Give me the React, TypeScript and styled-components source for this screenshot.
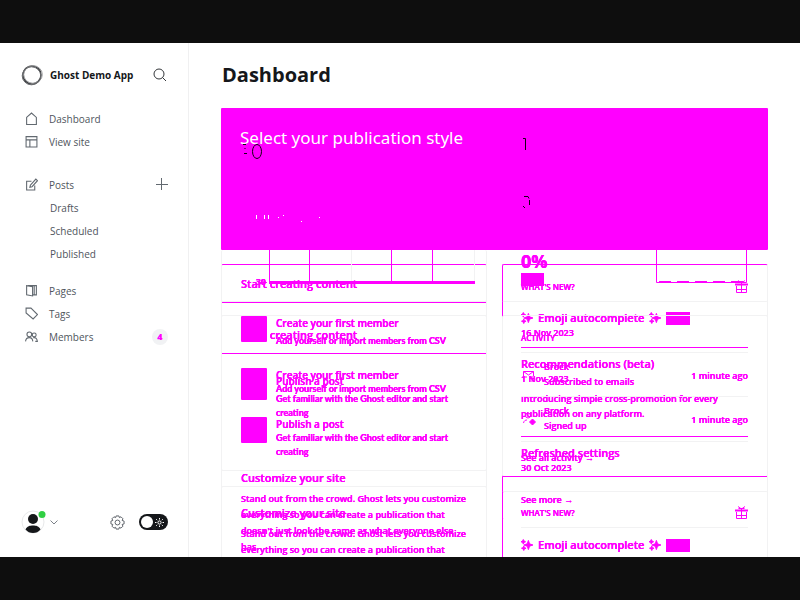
import React from "react";
import styled, { createGlobalStyle } from "styled-components";

const pink = "#ff00ff";
const faint = "#f2f2f3";

const GlobalStyle = createGlobalStyle`
  * { box-sizing: border-box; }
  body { margin: 0; font-family: "Open Sans", "Noto Sans", sans-serif; background: #fff; }
  h1, h2, h3, p, ul { margin: 0; padding: 0; }
  ul { list-style: none; }
  button { border: 0; padding: 0; background: none; font: inherit; color: inherit; display: flex; }
  a { color: inherit; text-decoration: none; }
  svg { display: block; flex: none; }
`;

const Frame = styled.div`
  display: grid;
  grid-template-rows: minmax(0, 1fr);
  grid-template-columns: 189px minmax(0, 1fr);
  height: 100vh;
  border: solid #0e0e0e;
  border-width: 43px 0;
  overflow: hidden;
`;

const Sidebar = styled.aside`
  display: flex;
  flex-direction: column;
  border-right: 1px solid #f0f0f1;
  padding: 21px 20px 23px 21px;
  color: #4f555d;
  font-size: 10px;
`;

const Brand = styled.header`
  display: flex;
  align-items: center;
  height: 22px;
  margin-bottom: 21px;
`;

const BrandName = styled.strong`
  flex: 1;
  margin-left: 7px;
  font-size: 10px;
  color: #15171a;
  white-space: nowrap;
`;

const NavGroup = styled.ul<{ $gap: number }>`
  margin-bottom: ${(p) => p.$gap}px;
`;

const NavItem = styled.li`
  display: flex;
  align-items: center;
  justify-content: space-between;
  height: 23px;
`;

const NavLink = styled.a<{ $sub?: boolean }>`
  display: flex;
  align-items: center;
  gap: 11px;
  padding-left: ${(p) => (p.$sub ? 29 : 4)}px;
`;

const CountBadge = styled.span`
  width: 16px;
  height: 16px;
  border-radius: 8px;
  background: #f1f2f4;
  color: ${pink};
  font-size: 9px;
  font-weight: 800;
  line-height: 16px;
  text-align: center;
`;

const AccountBar = styled.footer`
  display: flex;
  align-items: center;
  justify-content: space-between;
  margin-top: auto;
  height: 24px;
`;

const AccountGroup = styled.div`
  display: flex;
  align-items: center;
  gap: 14px;
`;

const ThemeSwitch = styled.button`
  && {
    width: 29px;
    height: 16px;
    padding: 2px 4px 2px 2px;
    border-radius: 8px;
    background: #15171a;
    align-items: center;
    justify-content: space-between;
  }
  &::before {
    content: "";
    width: 12px;
    height: 12px;
    border-radius: 6px;
    background: #fff;
  }
`;

const Main = styled.main`
  padding: 18px 32px 0;
  overflow: hidden;
`;

const PageTitle = styled.h1`
  font-size: 20px;
  line-height: 28px;
  margin: 0 0 19px 1px;
  color: #15171a;
`;

const Banner = styled.section`
  position: relative;
  height: 142px;
  padding: 20px 19px;
  background: ${pink};
  border-radius: 1px;
`;

const BannerTitle = styled.h2`
  font-family: "Noto Sans", sans-serif;
  font-size: 17px;
  font-weight: 400;
  line-height: 20px;
  color: #fff;
  white-space: nowrap;
`;

const BannerMarks = styled.svg`
  position: absolute;
  left: 0;
  top: 0;
`;

const Board = styled.div`
  display: grid;
`;

const Layer = styled.div`
  grid-area: 1 / 1;
  display: grid;
  grid-template-columns: minmax(0, 1fr) minmax(0, 1fr);
  gap: 15px;
  align-items: start;
`;

const Card = styled.section<{ $top?: number; $tone?: "pink" | "faint" | "open"; $side?: string; $h?: number }>`
  margin-top: ${(p) => p.$top ?? 0}px;
  min-height: ${(p) => p.$h ?? 0}px;
  border: 1px solid ${(p) => (p.$tone === "open" ? "transparent" : faint)};
  border-top-color: ${(p) => (p.$tone === "pink" ? pink : p.$tone === "open" ? "transparent" : faint)};
  border-bottom-color: ${(p) => (p.$tone ? "transparent" : faint)};
  border-left-color: ${(p) => p.$side ?? faint};
  border-radius: 2px;
  color: ${pink};
  text-shadow: 0 0 0 ${pink}, 0 0 0 ${pink};
  white-space: nowrap;
`;

const ChartCard = styled(Card)`
  display: flex;
  justify-content: space-between;
  align-items: flex-start;
  height: 52px;
  border-top: 0;
  border-bottom-color: ${faint};
`;

const CardHead = styled.h2`
  padding-left: 19px;
  font-size: 11px;
  font-weight: 600;
  line-height: 37px;
  border-bottom: 1px solid ${pink};
`;

const Steps = styled.ul<{ $top: number }>`
  padding: ${(p) => p.$top}px 19px 11px;
`;

const Step = styled.li<{ $h: number }>`
  display: flex;
  gap: 9px;
  min-height: ${(p) => p.$h}px;
`;

const StepArt = styled.span`
  width: 26px;
  height: 26px;
  flex: none;
  border-radius: 1px;
  background: ${pink};
`;

const StepTitle = styled.h3`
  font-size: 10px;
  line-height: 14px;
  font-weight: 600;
`;

const StepText = styled.p<{ $gap: number }>`
  margin-top: ${(p) => p.$gap}px;
  font-family: Lato, sans-serif;
  font-size: 9px;
  font-weight: 700;
  line-height: 14px;
`;

const Promo = styled.div<{ $top: number }>`
  padding: ${(p) => p.$top}px 19px 0;
`;

const PromoTitle = styled.h2`
  font-size: 11px;
  font-weight: 600;
  line-height: 16px;
  margin-bottom: 5px;
`;

const PromoText = styled.p`
  font-size: 9px;
  font-weight: 600;
  line-height: 16px;
`;

const Pane = styled.div<{ $top: number }>`
  padding: ${(p) => p.$top}px 19px 0 18px;
`;

const Caption = styled.h2`
  display: flex;
  justify-content: space-between;
  align-items: center;
  height: 12px;
  font-size: 8px;
  font-weight: 600;
`;

const Rule = styled.hr<{ $tone: string; $before: number; $after: number }>`
  border: 0;
  height: 1px;
  margin: ${(p) => p.$before}px 0 ${(p) => p.$after}px;
  background: ${(p) => p.$tone};
`;

const NewsTitle = styled.h3<{ $top?: number }>`
  display: flex;
  align-items: center;
  gap: 5px;
  margin-top: ${(p) => p.$top ?? 0}px;
  font-size: 11px;
  font-weight: 600;
  line-height: 14px;
`;

const NewTag = styled.span`
  width: 24px;
  height: 13px;
  background: ${pink};
`;

const Small = styled.p<{ $top?: number; $lh?: number }>`
  margin-top: ${(p) => p.$top ?? 1}px;
  font-size: 9px;
  font-weight: 600;
  line-height: ${(p) => p.$lh ?? 14}px;
`;

const Event = styled.div`
  display: flex;
  align-items: center;
  gap: 7px;
  height: 43px;
`;

const EventBody = styled.div`
  flex: 1;
`;

const Rate = styled.div`
  padding-left: 18px;
  font-size: 18px;
  font-weight: 700;
  line-height: 22px;
`;

const RateTag = styled.div`
  width: 23px;
  height: 13px;
  background: ${pink};
`;

const AxisLabel = styled.span`
  margin: 25px 3px 0 auto;
  font-size: 9px;
  font-weight: 700;
  line-height: 14px;
`;

const line = { fill: "none", stroke: "#626970", strokeWidth: 1 } as const;

const icons: Record<string, React.ReactNode> = {
  home: <path d="M1.500 5 6 1l4.500 4v6.500h-9Z" />,
  site: <path d="M1 1.500h10v9.500H1ZM1 4.500h10M4.500 4.500V11" />,
  edit: <path d="M6 3H1.500v8H9V7M5 6.500 10 1l1.500 1.500L6.500 8 4.500 8.500Z" />,
  pages: <path d="M1.500 1.500 7 2.500V11L1.500 10ZM3 1.500h5.500V10M9 1.500h1.500V10H7" />,
  tag: <path d="M1 1h4.500L11.500 7 7.500 11 1 5.500Z" />,
  members: (
    <>
      <circle cx="4" cy="4" r="2.200" />
      <circle cx="8.500" cy="4.500" r="1.800" />
      <path d="M0.500 10.500C.8 7.500 2 7 4 7s3 1 3.200 3.500M7.500 7.200C10 6.500 11.200 8 11.400 10.500H9.500" />
    </>
  ),
};

const Icon = ({ name }: { name: string }) => (
  <svg width="13" height="13" viewBox="0 0 12 12" {...line}>
    {icons[name]}
  </svg>
);

const Link = ({ icon, children }: { icon?: string; children: React.ReactNode }) => (
  <NavLink href="#" $sub={!icon}>
    {icon && <Icon name={icon} />}
    {children}
  </NavLink>
);

const Gear = () => (
  <svg width="15" height="15" viewBox="0 0 16 16" fill="none" stroke="#555b62">
    <circle cx="8" cy="8" r="2.600" />
    <path d="M6.500 1h3l.5 1.800 1.700-.9 2.100 2.100-.9 1.800 2.100.7v3l-2.100.6.9 1.800-2.100 2.100-1.700-.9-.5 1.900h-3L6 13.100l-1.800.9-2.100-2.100.9-1.800L1 9.500v-3l2-.7-.9-1.800 2.100-2.100 1.800.9Z" />
  </svg>
);

const Sun = () => (
  <svg width="9" height="9" viewBox="0 0 9 9" fill="none" stroke="#fff">
    <circle cx="4.500" cy="4.500" r="1.600" />
    <path d="M4.500 0v1.500M4.500 7.500V9M0 4.500h1.500M7.500 4.500H9M1.200 1.200l1 1M6.800 6.800l1 1M1.200 7.800l1-1M6.800 2.200l1-1" />
  </svg>
);

const Gift = () => (
  <svg width="13" height="13" viewBox="0 0 13 13" fill="none" stroke={pink}>
    <path d="M1.500 6v6.500h10V6M6.500 3v9.500M1.500 9.500h10M3 .5 6.500 3 10 .5M3.500 2.500h6" />
    <path d="M0 4.500h13" strokeWidth="2" />
  </svg>
);

const Sparkles = () => (
  <svg width="12" height="12" viewBox="0 0 13 12" fill={pink} stroke={pink}>
    <path d="M8 1l1.300 3.700L13 6 9.300 7.300 8 11 6.700 7.300 3 6l3.700-1.300ZM2.500 0l.8 1.700L5 2.500l-1.700.8L2.500 5l-.8-1.700L0 2.500l1.700-.8ZM3 7l.7 1.800L5.500 9.500l-1.800.7L3 12l-.7-1.800L.5 9.500l1.800-.7Z" />
  </svg>
);

const GettingStarted = ({ descGap, first, second, top }: { descGap: number; first: number; second: number; top: number }) => (
  <>
    <CardHead>Start creating content</CardHead>
    <Steps $top={top}>
      <Step $h={first}>
        <StepArt />
        <div>
          <StepTitle>Create your first member</StepTitle>
          <StepText $gap={descGap}>Add yourself or import members from CSV</StepText>
        </div>
      </Step>
      <Step $h={second}>
        <StepArt />
        <div>
          <StepTitle>Publish a post</StepTitle>
          <StepText $gap={descGap}>
            Get familiar with the Ghost editor and start
            <br />
            creating
          </StepText>
        </div>
      </Step>
    </Steps>
  </>
);

const Customize = ({ top }: { top: number }) => (
  <Promo $top={top}>
    <PromoTitle>Customize your site</PromoTitle>
    <PromoText>
      Stand out from the crowd. Ghost lets you customize
      <br />
      everything so you can create a publication that
      <br />
      doesn't just look the same as what everyone else
      <br />
      has.
    </PromoText>
  </Promo>
);

const EmojiNews = ({ top }: { top: number }) => (
  <>
    <NewsTitle $top={top}>
      <Sparkles />
      Emoji autocomplete
      <Sparkles />
      <NewTag />
    </NewsTitle>
    <Small>16 Nov 2023</Small>
  </>
);

const EventRow = ({ kind, text }: { kind: "mail" | "user"; text: string }) => (
  <Event>
    <svg width="16" height="14" viewBox="0 0 16 14" fill="none" stroke={pink}>
      {kind === "mail" ? (
        <path d="M2.500 9V3.500h10V8M2.500 3.500l5 3.500 5-3.500M2.500 9H6M8 10.500h6M11 8v6" />
      ) : (
        <>
          <circle cx="7" cy="3.500" r="2.500" />
          <path d="M2.500 11C3 8.500 4.500 8 6 8" />
          <path d="M11.500 7 14.500 10l-3 3-3-3Z" fill={pink} />
        </>
      )}
    </svg>
    <EventBody>
      <Small $top={0}>Brock</Small>
      <Small>{text}</Small>
    </EventBody>
    <Small $top={3}>1 minute ago</Small>
  </Event>
);

export default function App() {
  return (
    <>
      <GlobalStyle />
      <Frame>
        <Sidebar>
          <Brand>
            <svg width="22" height="22" viewBox="0 0 22 22" fill="none">
              <circle cx="11" cy="11" r="9" stroke="#3d3f42" strokeWidth="1.500" />
              <ellipse cx="12" cy="10.500" rx="9.300" ry="8.800" stroke="#9a9b9d" />
              <ellipse cx="10.500" cy="11.800" rx="9.300" ry="9" stroke="#66686b" />
            </svg>
            <BrandName>Ghost Demo App</BrandName>
            <button aria-label="Search">
              <svg width="15" height="14" viewBox="0 0 15 14" fill="none" stroke="#33363a">
                <circle cx="6" cy="6" r="5" />
                <path d="M9.500 9.500 13 13" />
              </svg>
            </button>
          </Brand>
          <nav>
            <NavGroup $gap={20}>
              <NavItem><Link icon="home">Dashboard</Link></NavItem>
              <NavItem><Link icon="site">View site</Link></NavItem>
            </NavGroup>
            <NavGroup $gap={14}>
              <NavItem>
                <Link icon="edit">Posts</Link>
                <button aria-label="New post">
                  <svg width="13" height="13" viewBox="0 0 13 13" stroke="#626970">
                    <path d="M1 6.500h12M6.500 0v12" />
                  </svg>
                </button>
              </NavItem>
              <NavItem><Link>Drafts</Link></NavItem>
              <NavItem><Link>Scheduled</Link></NavItem>
              <NavItem><Link>Published</Link></NavItem>
            </NavGroup>
            <NavGroup $gap={0}>
              <NavItem><Link icon="pages">Pages</Link></NavItem>
              <NavItem><Link icon="tag">Tags</Link></NavItem>
              <NavItem><Link icon="members">Members</Link><CountBadge>4</CountBadge></NavItem>
            </NavGroup>
          </nav>
          <AccountBar>
            <button aria-label="Account menu">
              <svg width="38" height="24" viewBox="0 0 38 24">
                <circle cx="12" cy="12" r="11" fill="#fff" stroke="#e8e9ea" />
                <circle cx="12" cy="9" r="5" fill="#15171a" />
                <path d="M4.500 19.500C6 16 9 15.500 12 15.500s6 .5 7.500 4C17.500 22 15 23 12 23s-5.500-1-7.500-3.500Z" fill="#15171a" />
                <circle cx="21" cy="4.500" r="3.500" fill="#30cf43" />
                <path d="m29.500 10.500 3.500 3.500 3.500-3.500" fill="none" stroke="#7c8188" />
              </svg>
            </button>
            <AccountGroup>
              <button aria-label="Settings"><Gear /></button>
              <ThemeSwitch role="switch" aria-checked="false" aria-label="Dark mode">
                <Sun />
              </ThemeSwitch>
            </AccountGroup>
          </AccountBar>
        </Sidebar>

        <Main>
          <PageTitle>Dashboard</PageTitle>
          <Banner>
            <BannerTitle>Select your publication style</BannerTitle>
            <BannerMarks width="330" height="142" fill="none" stroke="#150015">
              <ellipse cx="36" cy="43.500" rx="4.500" ry="7" />
              <path d="M22 36.500h3M24 40v1M23 45.500h3M302 30.500h2.500V42M303 88.500h4l1 2M308.500 92v5M302 98l2 2" />
              <path
                d="M35.500 107v4M43.500 107v4M47.500 107v4M57 109.500h1M62 107.500h1M80 113.500h1M98 109.500h1"
                stroke="#fff"
              />
            </BannerMarks>
          </Banner>

          <Board>
            <Layer>
              <Card $top={14} $tone="pink">
                <GettingStarted top={13} descGap={4} first={58} second={46} />
                <Customize top={39} />
              </Card>
              <Card $top={14} $tone="pink" $side={pink} $h={256}>
                <Pane $top={15}>
                  <Caption>WHAT'S NEW? <Gift /></Caption>
                  <EmojiNews top={19} />
                  <Rule $tone={pink} $before={7} $after={9} />
                  <NewsTitle>Recommendations (beta)</NewsTitle>
                  <Small>1 Nov 2023</Small>
                  <Small $top={5} $lh={15}>
                    Introducing simple cross-promotion for every
                    <br />
                    publication on any platform.
                  </Small>
                  <Rule $tone={pink} $before={15} $after={9} />
                  <NewsTitle>Refreshed settings</NewsTitle>
                  <Small>30 Oct 2023</Small>
                  <Small $top={18}><a href="#">See more →</a></Small>
                </Pane>
              </Card>
            </Layer>

            <Layer>
              <div>
                <ChartCard>
                  <AxisLabel>30</AxisLabel>
                  <svg width="206" height="35" viewBox="0 0 206 35" fill="none">
                    <path d="M82.500 0v31M205.500 0v31" stroke={faint} />
                    <path d="M.5 0v32M40.500 0v32M122.500 0v32M163.500 0v32" stroke={pink} />
                    <path d="M0 32.500h206" stroke={pink} strokeWidth="3" />
                  </svg>
                  <svg width="11" height="35" />
                </ChartCard>
                <Card $top={13}>
                  <GettingStarted top={14} descGap={0} first={49} second={42} />
                </Card>
                <Card $top={15}>
                  <Customize top={18} />
                </Card>
              </div>
              <div>
                <ChartCard $tone="open" $side="transparent">
                  <div>
                    <Rate>0%</Rate>
                    <Pane $top={1}><RateTag /></Pane>
                  </div>
                  <svg width="111" height="33" viewBox="0 0 111 33" fill="none" stroke={pink}>
                    <path d="M.5 0v32.500h90V0" />
                    <path d="M3 31.500h87" strokeDasharray="12 6" />
                  </svg>
                </ChartCard>
                <Card $top={13}>
                  <Pane $top={15}>
                    <Caption>ACTIVITY</Caption>
                    <Rule $tone={faint} $before={9} $after={0} />
                    <EventRow kind="mail" text="Subscribed to emails" />
                    <Rule $tone={faint} $before={0} $after={0} />
                    <EventRow kind="user" text="Signed up" />
                    <Rule $tone={faint} $before={1} $after={9} />
                    <Small $top={0}><a href="#">See all activity →</a></Small>
                  </Pane>
                  <Rule $tone={pink} $before={11} $after={-1} />
                </Card>
                <Card $top={14} $side={pink}>
                  <Pane $top={14}>
                    <Caption>WHAT'S NEW? <Gift /></Caption>
                    <Rule $tone={faint} $before={9} $after={0} />
                    <EmojiNews top={10} />
                  </Pane>
                </Card>
              </div>
            </Layer>
          </Board>
        </Main>
      </Frame>
    </>
  );
}
